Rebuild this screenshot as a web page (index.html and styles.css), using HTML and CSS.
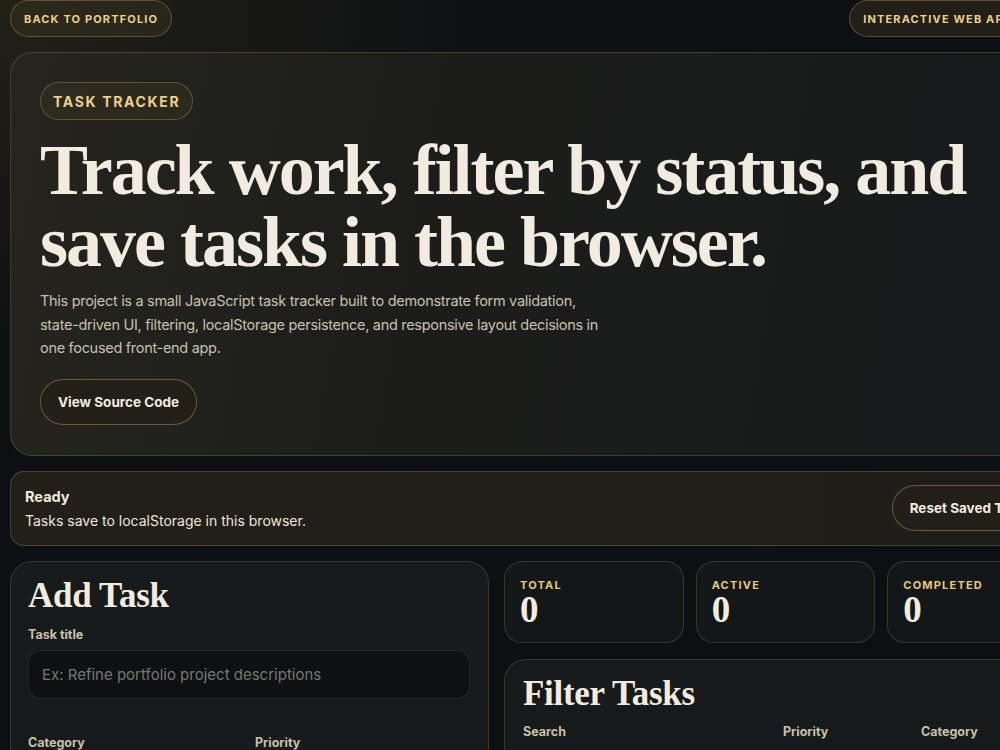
FILE: index.html
```html
<!DOCTYPE html>
<html lang="en">
<head>
<meta charset="utf-8">
<title>Task Tracker</title>
<link rel="stylesheet" href="styles.css">
</head>
<body>
<div class="page">
  <div class="topbar">
    <a class="pill pill-top" href="#">Back to Portfolio</a>
    <span class="pill pill-top pill-kind">Interactive Web App</span>
  </div>

  <section class="hero">
    <span class="pill pill-hero">Task Tracker</span>
    <h1 class="hero-title">Track work, filter by status, and save tasks in the browser.</h1>
    <p class="hero-text">This project is a small JavaScript task tracker built to demonstrate form validation, state-driven UI, filtering, localStorage persistence, and responsive layout decisions in one focused front-end app.</p>
    <a class="btn" href="#">View Source Code</a>
  </section>

  <section class="status">
    <div class="status-text">
      <strong class="status-title">Ready</strong>
      <span class="status-msg">Tasks save to localStorage in this browser.</span>
    </div>
    <button class="btn btn-reset">Reset Saved Tasks</button>
  </section>

  <div class="main">
    <section class="card add-card">
      <h2 class="card-title">Add Task</h2>
      <label class="field">
        <span class="label">Task title</span>
        <input class="input" type="text" placeholder="Ex: Refine portfolio project descriptions">
      </label>
      <div class="row-2">
        <span class="label">Category</span>
        <span class="label">Priority</span>
      </div>
    </section>

    <div class="right">
      <div class="stats">
        <div class="stat"><span class="stat-label">Total</span><span class="stat-num">0</span></div>
        <div class="stat"><span class="stat-label">Active</span><span class="stat-num">0</span></div>
        <div class="stat"><span class="stat-label">Completed</span><span class="stat-num">0</span></div>
      </div>
      <section class="card filter-card">
        <h2 class="card-title">Filter Tasks</h2>
        <div class="filter-grid">
          <span class="label">Search</span>
          <span class="label">Priority</span>
          <span class="label">Category</span>
        </div>
      </section>
    </div>
  </div>
</div>
</body>
</html>
```
FILE: styles.css
```css
html, body { margin: 0; padding: 0; }
::-webkit-scrollbar { display: none; }
html { overflow: hidden; }
body {
  background:
    radial-gradient(ellipse 700px 500px at 0% 0%, rgba(60, 52, 34, 0.45), rgba(0,0,0,0) 70%),
    #0d1012;
  color: #f1ecdf;
  font-family: Inter, "Noto Sans", sans-serif;
  min-height: 750px;
}
.page {
  width: 1057px;
  margin-left: 10px;
  display: flex;
  flex-direction: column;
}
.topbar {
  display: flex;
  justify-content: space-between;
  align-items: center;
  height: 37px;
}
.pill {
  display: inline-flex;
  align-items: center;
  border: 1px solid rgba(214, 176, 98, 0.32);
  background: rgba(58, 50, 32, 0.45);
  border-radius: 999px;
  color: #ead08a;
  font-weight: 700;
  text-transform: uppercase;
  text-decoration: none;
  box-sizing: border-box;
}
.pill-top {
  height: 37px;
  padding: 0 13px;
  font-size: 11px;
  letter-spacing: 1.15px;
}
.pill-kind { margin-right: 41px; }
.hero {
  margin-top: 15px;
  border: 1px solid rgba(214, 176, 98, 0.22);
  border-radius: 22px;
  background: linear-gradient(100deg, #25241e 0%, #1c1d1b 40%, #171a1b 100%);
  padding: 29px 29px 30px;
  display: flex;
  flex-direction: column;
  align-items: flex-start;
}
.pill-hero {
  height: 38px;
  padding: 0 12px;
  font-size: 14px;
  letter-spacing: 1.65px;
}
.hero-title {
  margin: 14px 0 0;
  font-family: "Liberation Serif", serif;
  font-weight: 700;
  font-size: 72px;
  line-height: 72px;
  letter-spacing: -2px;
  color: #f1ecdf;
  max-width: 960px;
}
.hero-text {
  margin: 11px 0 0;
  max-width: 566px;
  font-size: 14.5px;
  line-height: 23.5px;
  letter-spacing: -0.3px;
  color: #c7c0ae;
}
.btn {
  display: inline-flex;
  align-items: center;
  height: 46px;
  padding: 0 17px;
  border: 1px solid rgba(214, 176, 98, 0.4);
  border-radius: 999px;
  background: #221f19;
  color: #f1ecdf;
  font-family: Inter, sans-serif;
  font-size: 13.5px;
  font-weight: 700;
  text-decoration: none;
  box-sizing: border-box;
  margin-top: 19px;
}
.status {
  margin-top: 15px;
  height: 75px;
  box-sizing: border-box;
  border: 1px solid rgba(214, 176, 98, 0.25);
  border-radius: 14px;
  background: linear-gradient(90deg, #221f19, #201e19 70%, #1d1c18);
  display: flex;
  align-items: center;
  justify-content: space-between;
  padding: 0 15px 0 14px;
}
.status-text { display: flex; flex-direction: column; gap: 7px; }
.status-title { font-size: 14.5px; font-weight: 700; color: #f1ecdf; }
.status-msg { font-size: 14px; color: #ece6d8; }
.btn-reset { margin-top: 0; padding: 0 17px; }
.main {
  margin-top: 15px;
  display: grid;
  grid-template-columns: 479px 1fr;
  gap: 15px;
  align-items: start;
}
.card {
  border: 1px solid rgba(214, 176, 98, 0.2);
  border-radius: 22px;
  background: #161a1a;
  box-sizing: border-box;
}
.add-card { padding: 14px 18px 20px 17px; min-height: 260px; }
.card-title {
  margin: 0;
  font-family: "Liberation Serif", serif;
  font-weight: 700;
  font-size: 35px;
  line-height: 40px;
  letter-spacing: -0.3px;
  color: #f1ecdf;
}
.field { display: flex; flex-direction: column; margin-top: 11px; }
.label { font-size: 12.5px; font-weight: 700; color: #c9c0aa; }
.input {
  margin-top: 8px;
  height: 49px;
  box-sizing: border-box;
  border: 1px solid rgba(214, 176, 98, 0.14);
  border-radius: 13px;
  background: #0e1011;
  padding: 0 13px;
  font-family: Inter, sans-serif;
  font-size: 15px;
  color: #f1ecdf;
}
.input::placeholder { color: #77776f; }
.row-2 {
  margin-top: 36px;
  display: grid;
  grid-template-columns: 1fr 1fr;
  gap: 12px;
}
.right { display: flex; flex-direction: column; gap: 16px; }
.stats {
  display: grid;
  grid-template-columns: repeat(3, 1fr);
  gap: 12px;
}
.stat {
  height: 82px;
  box-sizing: border-box;
  border: 1px solid rgba(214, 176, 98, 0.2);
  border-radius: 18px;
  background: #141717;
  padding: 16px 15px 0;
  display: flex;
  flex-direction: column;
}
.stat-label {
  font-size: 11px;
  font-weight: 700;
  letter-spacing: 1.2px;
  text-transform: uppercase;
  color: #e6c77d;
}
.stat-num {
  font-family: "Liberation Serif", serif;
  font-weight: 700;
  font-size: 37px;
  line-height: 36px;
  color: #f1ecdf;
}
.filter-card { padding: 14px 18px 20px; min-height: 200px; }
.filter-grid {
  margin-top: 10px;
  display: grid;
  grid-template-columns: 248px 126px 126px;
  gap: 12px;
}
```
